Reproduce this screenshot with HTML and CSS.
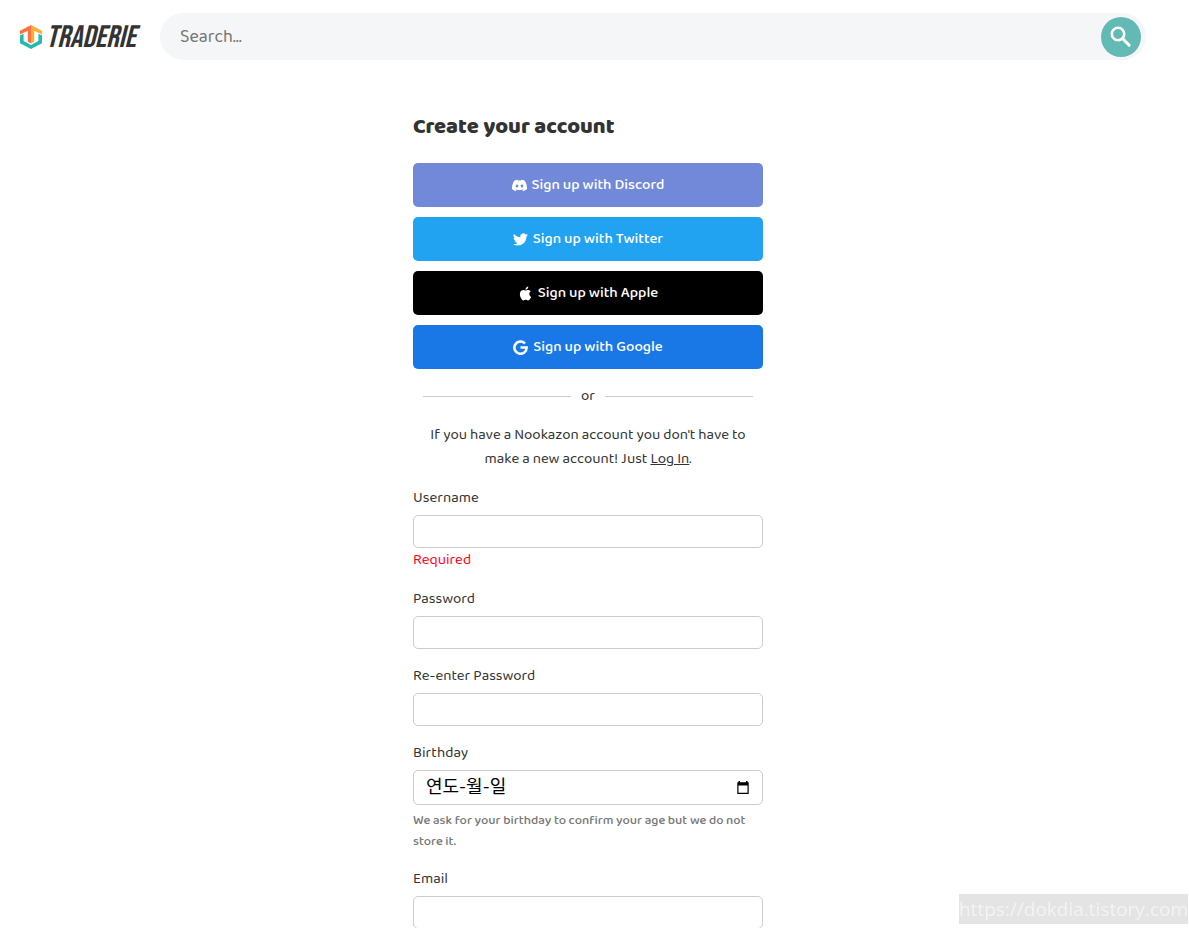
FILE: index.html
```
<!DOCTYPE html>
<html lang="en">
<head>
    <meta charset="UTF-8">
    <meta name="viewport" content="width=device-width, initial-scale=1.0">
    <title>Traderie - Sign Up</title>
    <link rel="stylesheet" href="styles.css">
</head>
<body>
    <header class="navbar">
        <a class="logo" href="/" aria-label="Traderie">
            <svg class="logo-mark" viewBox="0 0 22 24" aria-hidden="true">
                <path fill="#23bbad" d="M0 10.5l3.6-1.8V16l7.4 4 7.4-4V8.7l3.6 1.8v7.7L11 24 0 18.2z"/>
                <path fill="#ff7043" d="M0 5.8 11 0v18.500l-3.200-1.700V5.800L0 9.500z"/>
                <path fill="#fbb034" d="M22 5.800 11 0v18.500l3.200-1.700V5.800L22 9.500z"/>
            </svg>
            <span class="logo-text">TRADERIE</span>
        </a>
        <form class="search">
            <input class="search-input" type="text" placeholder="Search..." aria-label="Search">
            <button class="search-btn" type="submit" aria-label="Search">
                <svg viewBox="0 0 24 24" aria-hidden="true">
                    <circle cx="9" cy="9" r="6.200" fill="none" stroke="#fff" stroke-width="2.600"/>
                    <path d="M13.800 13.800l6.400 6.400" stroke="#fff" stroke-width="3" stroke-linecap="round"/>
                </svg>
            </button>
        </form>
    </header>

    <main class="signup">
        <h1>Create your account</h1>

        <div class="social">
            <button class="social-btn discord" type="button">
                <svg viewBox="0 0 24 24" aria-hidden="true"><path fill="currentColor" d="M20.3 4.4A19.8 19.8 0 0 0 15.4 2.9l-.6 1.2a18 18 0 0 0-5.6 0l-.6-1.2a19.7 19.7 0 0 0-4.9 1.5C.5 9 -.3 13.6.1 18.1a20 20 0 0 0 6 3l1.2-2-1.9-.9.5-.4a14.2 14.2 0 0 0 12.2 0l.5.4-1.9.9 1.2 2a19.9 19.9 0 0 0 6-3c.5-5.2-.8-9.7-3.600-13.700zM8 15.3c-1.200 0-2.200-1.100-2.200-2.400S6.800 10.500 8 10.500s2.200 1.100 2.200 2.400-1 2.400-2.200 2.400zm8 0c-1.200 0-2.200-1.100-2.200-2.400s1-2.400 2.200-2.400 2.200 1.100 2.200 2.400-1 2.400-2.200 2.400z"/></svg>
                <span>Sign up with Discord</span>
            </button>
            <button class="social-btn twitter" type="button">
                <svg viewBox="0 0 24 24" aria-hidden="true"><path fill="currentColor" d="M23.950 4.570a10 10 0 0 1-2.820.770 4.960 4.960 0 0 0 2.160-2.720c-.950.550-2 .950-3.130 1.180a4.920 4.920 0 0 0-8.380 4.480C7.690 8.090 4.070 6.130 1.640 3.160a4.920 4.920 0 0 0 1.520 6.570 4.900 4.900 0 0 1-2.230-.610v.060c0 2.390 1.700 4.380 3.950 4.830a5 5 0 0 1-2.210.080 4.940 4.940 0 0 0 4.600 3.420A9.870 9.870 0 0 1 0 19.540a13.990 13.990 0 0 0 7.550 2.210c9.050 0 14-7.500 14-13.980 0-.210 0-.420-.020-.630a9.940 9.940 0 0 0 2.420-2.570z"/></svg>
                <span>Sign up with Twitter</span>
            </button>
            <button class="social-btn apple" type="button">
                <svg viewBox="-1 -1 26 26" aria-hidden="true"><path fill="currentColor" d="M12.150 6.900c-.950 0-2.420-1.080-3.960-1.040-2.040.030-3.910 1.180-4.960 3.010-2.120 3.680-.550 9.100 1.520 12.090 1.010 1.450 2.210 3.090 3.790 3.040 1.520-.070 2.090-.990 3.940-.990 1.830 0 2.350.990 3.960.950 1.640-.030 2.680-1.480 3.680-2.950 1.160-1.690 1.640-3.320 1.660-3.410-.040-.010-3.180-1.220-3.220-4.860-.030-3.040 2.480-4.490 2.600-4.560-1.430-2.090-3.620-2.320-4.390-2.380-2-.160-3.670 1.090-4.610 1.090zM15.530 3.830c.840-1.010 1.400-2.430 1.250-3.830-1.210.050-2.660.800-3.530 1.820-.780.900-1.450 2.340-1.270 3.710 1.340.100 2.710-.690 3.550-1.700z"/></svg>
                <span>Sign up with Apple</span>
            </button>
            <button class="social-btn google" type="button">
                <svg viewBox="0 0 24 24" aria-hidden="true"><path fill="none" stroke="currentColor" stroke-width="4" d="M19.200 5.600A9.800 9.800 0 1 0 21.800 12H12"/></svg>
                <span>Sign up with Google</span>
            </button>
        </div>

        <div class="divider">or</div>

        <p class="notice">If you have a Nookazon account you don't have to make a new account! Just <a href="/login">Log In</a>.</p>

        <form class="signup-form">
            <div class="field">
                <label for="username">Username</label>
                <input type="text" id="username">
                <span class="error">Required</span>
            </div>
            <div class="field">
                <label for="password">Password</label>
                <input type="password" id="password">
            </div>
            <div class="field">
                <label for="password2">Re-enter Password</label>
                <input type="password" id="password2">
            </div>
            <div class="field">
                <label for="birthday">Birthday</label>
                <div class="date-box">
                    <input type="text" id="birthday" placeholder="연도-월-일">
                    <button class="date-btn" type="button" aria-label="Open calendar">
                        <svg viewBox="0 0 14 14" aria-hidden="true">
                            <path d="M2.500 0H4v1.300h6V0h1.500v1.300h1.200V13H1.300V1.300h1.200zM2.500 4.500v7.300h9V4.500z" fill="#000" fill-rule="evenodd"/>
                        </svg>
                    </button>
                </div>
                <small>We ask for your birthday to confirm your age but we do not store it.</small>
            </div>
            <div class="field">
                <label for="email">Email</label>
                <input type="email" id="email">
            </div>
        </form>
    </main>

    <div class="watermark">https://dokdia.tistory.com</div>
</body>
</html>
```
FILE: styles.css
```
* {
    box-sizing: border-box;
}

body {
    margin: 0;
    padding-right: 13px;
    font-family: "Baloo 2", "Noto Sans", "Noto Sans CJK KR", sans-serif;
    font-size: 15px;
    line-height: 24px;
    color: #333;
    background: #fff;
}

input,
button {
    font-family: inherit;
}

.navbar {
    display: flex;
    align-items: center;
    gap: 20px;
    padding: 13px 30px 0 20px;
}

.logo {
    display: flex;
    align-items: center;
    gap: 4px;
    width: 120px;
    color: #333;
    text-decoration: none;
}

.logo-mark {
    flex: none;
    width: 22px;
    height: 24px;
}

.logo-text {
    padding-top: 3px;
    font-family: "Bebas Neue", "Barlow Condensed", "Oswald", "Liberation Sans", sans-serif;
    font-size: 31px;
    font-style: italic;
}

.search {
    flex: 1;
    display: flex;
    align-items: center;
    height: 47px;
    padding: 0 5px 0 20px;
    background: #f5f6f8;
    border-radius: 24px;
}

.search-input {
    flex: 1;
    border: none;
    outline: none;
    padding: 0;
    background: transparent;
    font-size: 18px;
}

.search-input::placeholder {
    color: #757575;
}

.search-btn {
    display: flex;
    align-items: center;
    justify-content: center;
    width: 40px;
    height: 40px;
    padding: 0;
    border: none;
    border-radius: 50%;
    background: #63bab4;
    cursor: pointer;
}

.search-btn svg {
    width: 24px;
    height: 24px;
}

.signup {
    max-width: 350px;
    margin: 51px auto 0;
}

h1 {
    margin: 0 0 20px;
    font-size: 22px;
    font-weight: 800;
    line-height: 32px;
}

.social {
    display: flex;
    flex-direction: column;
    gap: 10px;
}

.social-btn {
    display: flex;
    align-items: center;
    justify-content: center;
    gap: 5px;
    height: 44px;
    border: none;
    border-radius: 5px;
    color: #fff;
    font-size: 15px;
    font-weight: 500;
    line-height: 24px;
    cursor: pointer;
}

.social-btn svg {
    width: 15px;
    height: 15px;
}

.discord {
    background: #7289da;
}

.twitter {
    background: #21a3f1;
}

.apple {
    background: #000;
}

.google {
    background: #1a78e6;
}

.divider {
    display: flex;
    align-items: center;
    gap: 10px;
    margin: 15px 10px;
}

.divider::before,
.divider::after {
    content: "";
    flex: 1;
    height: 1px;
    background: #ccc;
}

.notice {
    margin: 0 0 15px;
    text-align: center;
}

.notice a {
    color: inherit;
}

.field {
    display: flex;
    flex-direction: column;
    margin-bottom: 15px;
}

.field label {
    margin-bottom: 5px;
}

.field input {
    height: 33px;
    padding: 0 12px;
    border: 1px solid #ccc;
    border-radius: 5px;
    font-size: 16px;
    background: #fff;
}

.field:last-child {
    margin-bottom: 0;
}

.field .error {
    color: #ff0019;
}

.date-box {
    display: flex;
    align-items: center;
    height: 35px;
    padding: 0 12px;
    border: 1px solid #ccc;
    border-radius: 5px;
}

.date-box input {
    flex: 1;
    height: auto;
    padding: 0;
    border: none;
    outline: none;
    font-size: 18px;
}

.date-box input::placeholder {
    color: #000;
}

.date-btn {
    display: flex;
    padding: 0;
    border: none;
    background: none;
    cursor: pointer;
}

.date-btn svg {
    width: 14px;
    height: 14px;
}

.field small {
    margin-top: 5px;
    font-size: 13px;
    font-weight: 500;
    line-height: 21px;
    color: #777;
}

.watermark {
    position: fixed;
    right: 1px;
    bottom: 4px;
    font-family: "Open Sans", sans-serif;
    font-size: 19px;
    line-height: 30px;
    color: #f3f3f3;
    background: #e4e4e4;
}
```
